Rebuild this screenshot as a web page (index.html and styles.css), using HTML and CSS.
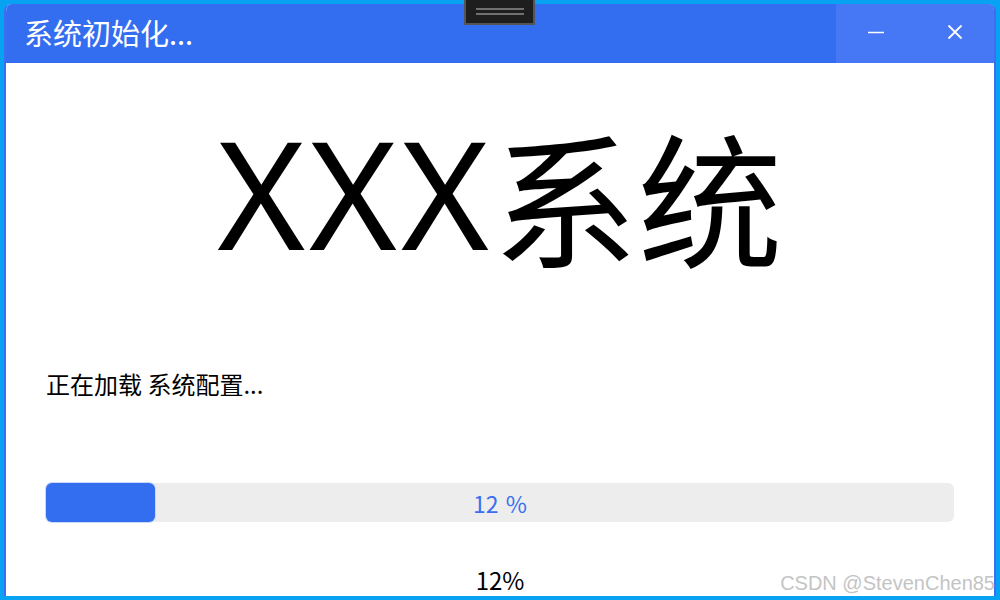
FILE: index.html
```html
<!DOCTYPE html>
<html lang="zh-CN">
<head>
<meta charset="utf-8">
<title>系统初始化...</title>
<link rel="stylesheet" href="styles.css">
</head>
<body>
<div class="grip"><span></span><span></span></div>
<div class="window">
  <div class="titlebar">
    <div class="title">系统初始化...</div>
    <div class="controls">
      <div class="btn">
        <svg width="16" height="16" viewBox="0 0 16 16"><path d="M0 8.5h16" stroke="#fff" stroke-width="1.6"/></svg>
      </div>
      <div class="btn">
        <svg width="16" height="16" viewBox="0 0 16 16"><path d="M1.5 1.5l13 13M14.5 1.5l-13 13" stroke="#fff" stroke-width="1.8"/></svg>
      </div>
    </div>
  </div>
  <div class="content">
    <div class="brand"><span class="xs">XXX</span>系统</div>
    <div class="status">正在加载 系统配置...</div>
    <div class="bar">
      <div class="fill" style="width:12%"></div>
      <div class="bar-text">12 %</div>
    </div>
    <div class="percent">12%</div>
  </div>
</div>
<div class="watermark">CSDN @StevenChen85</div>
</body>
</html>
```
FILE: styles.css
```css
html, body {
  margin: 0;
  padding: 0;
  width: 1000px;
  height: 600px;
  overflow: hidden;
}
body {
  background: #08a2f2;
  font-family: "Noto Sans CJK SC", "Noto Sans", sans-serif;
  position: relative;
}
.window {
  margin: 4px 4px 0 4px;
  height: 592px;
  background: #fff;
  border-left: 2px solid #3b6ef2;
  border-right: 2px solid #3b6ef2;
  border-radius: 8px 8px 0 0;
  box-sizing: border-box;
  display: flex;
  flex-direction: column;
  overflow: hidden;
}
.titlebar {
  height: 59px;
  flex: none;
  background: #346ef0;
  display: flex;
  align-items: center;
  justify-content: space-between;
}
.title {
  color: #fff;
  font-size: 29px;
  padding-left: 18px;
  line-height: 1;
  margin-top: -3px;
}
.controls {
  display: flex;
  height: 100%;
  background: #4677f4;
}
.btn {
  width: 79px;
  height: 100%;
  display: flex;
  align-items: center;
  justify-content: center;
}
.btn svg { margin-top: -4px; }
.content {
  flex: 1;
  padding: 0 40px;
  display: flex;
  flex-direction: column;
}
.brand {
  margin-top: 60px;
  font-size: 145px;
  line-height: 145px;
  text-align: center;
  color: #000;
}
.brand .xs {
  font-family: "Noto Sans", sans-serif;
  font-size: 150px;
  line-height: 0;
  letter-spacing: 4px;
  vertical-align: 8px;
}
.status {
  margin-top: 103px;
  font-size: 24px;
  line-height: 26px;
  color: #000;
}
.bar {
  margin-top: 86px;
  height: 39px;
  background: #ededed;
  border-radius: 6px;
  position: relative;
}
.fill {
  height: 100%;
  background: #346ef0;
  border-radius: 6px;
  box-shadow: 0 0 0 1px #c9d7fa;
}
.bar-text {
  position: absolute;
  inset: 0;
  display: flex;
  align-items: center;
  justify-content: center;
  color: #3b6ff0;
  font-size: 23px;
  word-spacing: 2px;
}
.percent {
  margin-top: 43px;
  text-align: center;
  font-size: 24px;
  line-height: 30px;
  color: #000;
}
.grip {
  position: absolute;
  left: 464px;
  top: 0;
  width: 71px;
  height: 25px;
  box-sizing: border-box;
  background: #1e1e1e;
  border: 2px solid #555;
  border-top: 0;
  display: flex;
  flex-direction: column;
  align-items: center;
  justify-content: center;
  gap: 3px;
  z-index: 2;
}
.grip span {
  display: block;
  width: 48px;
  height: 2px;
  background: #707070;
}
.watermark {
  position: absolute;
  right: 5px;
  bottom: 6px;
  font-family: "Liberation Sans", Arial, sans-serif;
  font-size: 20px;
  line-height: 22px;
  color: #c4c4c4;
}
```
